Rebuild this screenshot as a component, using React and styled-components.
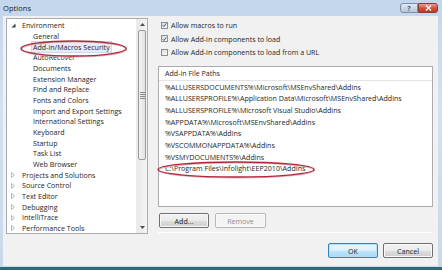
import React from 'react'
import styled, { createGlobalStyle } from 'styled-components'

const Global = createGlobalStyle`
html, body {
  margin: 0;
  padding: 0;
  background: #ffffff;
}
* {
  box-sizing: border-box;
}
`;

const Window = styled.div`
width: 442px;
height: 270px;
display: flex;
flex-direction: column;
background: linear-gradient(#c3d6ec, #d3e1f0 40%, #c8d9ec);
border-bottom: 3px solid #2a6b78;
font-family: "Open Sans", Lato, sans-serif;
font-size: 7.1px;
color: #1e1e1e;
overflow: hidden;
`;

const TitleBar = styled.div`
height: 16px;
display: flex;
align-items: flex-start;
padding-left: 3px;
padding-right: 4px;
`;

const Title = styled.div`
font-size: 7.6px;
line-height: 16px;
color: #1a1a1a;
flex: 1;
`;

const CaptionButton = styled.div`
height: 10px;
margin-top: 3px;
width: ${p => p.$w}px;
display: flex;
align-items: center;
justify-content: center;
font-size: 7px;
font-weight: bold;
border: 1px solid ${p => (p.$close ? '#8a3a30' : '#7d8ea4')};
border-radius: ${p => (p.$close ? '0 3px 3px 0' : '3px 0 0 3px')};
background: ${p =>
  p.$close
    ? 'linear-gradient(#e8a093, #d2533f 50%, #c2361f)'
    : 'linear-gradient(#e3ebf4, #c8d6e6 50%, #b9cade)'};
color: ${p => (p.$close ? '#ffffff' : '#44566e')};
`;

const Client = styled.div`
flex: 1;
margin: 0 4px 1px 3px;
background: #f1f1f1;
padding: 2px 5px 0 3px;
display: flex;
flex-direction: column;
`;

const Main = styled.div`
height: 216px;
display: flex;
gap: 10px;
`;

const TreePanel = styled.div`
position: relative;
width: 142px;
height: 216px;
background: #ffffff;
border: 1px solid #a9acb2;
display: flex;
`;

const TreeList = styled.div`
flex: 1;
padding-top: 1.3px;
`;

const TreeRow = styled.div`
height: 10.68px;
line-height: 10.68px;
display: flex;
align-items: center;
padding-left: ${p => (p.$child ? 25 : 4)}px;
white-space: nowrap;
`;

const Expander = styled.span`
width: 10px;
display: inline-flex;
align-items: center;
justify-content: flex-start;
`;

const ItemText = styled.span`
padding: 0 1px;
${p =>
  p.$selected &&
  `
  background: #e4eefa;
  outline: 1px solid #c9dbf1;
`}
`;

const ScrollBar = styled.div`
width: 11px;
display: flex;
flex-direction: column;
background: linear-gradient(90deg, #e9e9e9, #f5f5f5);
border-left: 1px solid #ececec;
`;

const ScrollArrow = styled.div`
height: 11px;
display: flex;
align-items: center;
justify-content: center;
`;

const ScrollTrack = styled.div`
flex: 1;
display: flex;
flex-direction: column;
padding: 0 1px;
`;

const Thumb = styled.div`
height: 130px;
border: 1px solid #9a9a9a;
border-radius: 2px;
background: linear-gradient(90deg, #f3f3f3, #e2e2e2);
display: flex;
flex-direction: column;
align-items: center;
justify-content: center;
gap: 1px;
`;

const Grip = styled.div`
width: 5px;
height: 1px;
background: #8b8b8b;
`;

const RightPane = styled.div`
width: 275px;
display: flex;
flex-direction: column;
`;

const Checks = styled.div`
height: 48px;
padding-top: 0.5px;
`;

const CheckRow = styled.div`
height: 13.5px;
display: flex;
align-items: center;
gap: 3px;
padding-left: 3px;
`;

const Box = styled.span`
width: 7px;
height: 7px;
border: 1px solid #8e8f8f;
background: linear-gradient(135deg, #dcdcdc, #fbfbfb);
display: inline-flex;
align-items: center;
justify-content: center;
`;

const ListBox = styled.div`
position: relative;
height: 141px;
background: #ffffff;
border: 1px solid #a9acb2;
`;

const ListHeader = styled.div`
height: 14px;
line-height: 13px;
padding-left: 6px;
border-bottom: 1px solid #e2e3e6;
`;

const PathRows = styled.div`
padding-top: 0.5px;
`;

const PathRow = styled.div`
height: 11.7px;
line-height: 11.7px;
padding-left: 6px;
white-space: nowrap;
`;

const ButtonRow = styled.div`
display: flex;
gap: 6px;
margin-top: 6px;
padding-left: 1px;
`;

const Button = styled.div`
width: ${p => p.$w || 50}px;
height: 15px;
display: flex;
align-items: center;
justify-content: center;
border-radius: 2px;
border: 1px solid ${p => (p.$default ? '#3c7fb1' : p.$disabled ? '#b5b8ba' : '#707070')};
background: ${p =>
  p.$default
    ? 'linear-gradient(#eaf6fd, #d9f0fc 50%, #bee6fd 51%, #a7d9f5)'
    : p.$disabled
    ? '#f4f4f4'
    : 'linear-gradient(#f2f2f2, #ebebeb 50%, #dddddd 51%, #cfcfcf)'};
color: ${p => (p.$disabled ? '#8f8f8f' : '#1e1e1e')};
box-shadow: ${p => (p.$default ? 'inset 0 0 0 1px #b7e0f8' : 'inset 0 0 0 1px #fafafa')};
`;

const Separator = styled.div`
margin-top: auto;
margin-bottom: 1px;
height: 1px;
background: #d5d5d5;
border-bottom: 1px solid #ffffff;
`;

const Footer = styled.div`
display: flex;
justify-content: flex-end;
gap: 5px;
margin-top: 9px;
`;

const Ring = styled.svg`
position: absolute;
left: ${p => p.$x}px;
top: ${p => p.$y}px;
overflow: visible;
pointer-events: none;
`;

function Annotation({ x, y, w, h }) {
  return (
    <Ring $x={x} $y={y} width={w} height={h} viewBox={`0 0 ${w} ${h}`}>
      <ellipse cx={w / 2 + 0.6} cy={h / 2 + 0.8} rx={w / 2 - 1} ry={h / 2 - 1} fill="none" stroke="#d9b7b9" strokeWidth="1.4" />
      <ellipse cx={w / 2} cy={h / 2} rx={w / 2 - 1} ry={h / 2 - 1} fill="none" stroke="#b3273a" strokeWidth="1.3" />
    </Ring>
  )
}

function Tick() {
  return (
    <svg width="6" height="6" viewBox="0 0 6 6">
      <path d="M0.8 3.2 L2.4 4.8 L5.2 0.9" fill="none" stroke="#2b4f8a" strokeWidth="1.1" />
    </svg>
  )
}

const children = [
  'General',
  'Add-in/Macros Security',
  'AutoRecover',
  'Documents',
  'Extension Manager',
  'Find and Replace',
  'Fonts and Colors',
  'Import and Export Settings',
  'International Settings',
  'Keyboard',
  'Startup',
  'Task List',
  'Web Browser',
]

const collapsed = [
  'Projects and Solutions',
  'Source Control',
  'Text Editor',
  'Debugging',
  'IntelliTrace',
  'Performance Tools',
]

const paths = [
  '%ALLUSERSDOCUMENTS%\\Microsoft\\MSEnvShared\\Addins',
  '%ALLUSERSPROFILE%\\Application Data\\Microsoft\\MSEnvShared\\Addins',
  '%ALLUSERSPROFILE%\\Microsoft Visual Studio\\Addins',
  '%APPDATA%\\Microsoft\\MSEnvShared\\Addins',
  '%VSAPPDATA%\\Addins',
  '%VSCOMMONAPPDATA%\\Addins',
  '%VSMYDOCUMENTS%\\Addins',
  'C:\\Program Files\\Infolight\\EEP2010\\AddIns',
]

const checks = [
  { label: 'Allow macros to run', on: true },
  { label: 'Allow Add-in components to load', on: true },
  { label: 'Allow Add-in components to load from a URL', on: false },
]

export default function App() {
  return (
    <>
      <Global />
      <Window>
        <TitleBar>
          <Title>Options</Title>
          <CaptionButton $w={18}>?</CaptionButton>
          <CaptionButton $w={20} $close>
            <svg width="7" height="6" viewBox="0 0 7 6">
              <path d="M1 0.5 L6 5.5 M6 0.5 L1 5.5" stroke="#ffffff" strokeWidth="1.4" />
            </svg>
          </CaptionButton>
        </TitleBar>
        <Client>
          <Main>
            <TreePanel>
              <TreeList>
                <TreeRow>
                  <Expander>
                    <svg width="5" height="5" viewBox="0 0 5 5">
                      <path d="M4.5 0.5 L4.5 4.5 L0.5 4.5 Z" fill="#3c3c3c" />
                    </svg>
                  </Expander>
                  <ItemText>Environment</ItemText>
                </TreeRow>
                {children.map(c => (
                  <TreeRow key={c} $child>
                    <ItemText $selected={c === 'Add-in/Macros Security'}>{c}</ItemText>
                  </TreeRow>
                ))}
                {collapsed.map(c => (
                  <TreeRow key={c}>
                    <Expander>
                      <svg width="4" height="6" viewBox="0 0 4 6">
                        <path d="M0.5 0.5 L3.5 3 L0.5 5.5 Z" fill="none" stroke="#a5a5a5" strokeWidth="0.8" />
                      </svg>
                    </Expander>
                    <ItemText>{c}</ItemText>
                  </TreeRow>
                ))}
              </TreeList>
              <ScrollBar>
                <ScrollArrow>
                  <svg width="5" height="3" viewBox="0 0 5 3">
                    <path d="M0 3 L2.5 0 L5 3 Z" fill="#4d4d4d" />
                  </svg>
                </ScrollArrow>
                <ScrollTrack>
                  <Thumb>
                    <Grip />
                    <Grip />
                    <Grip />
                    <Grip />
                  </Thumb>
                </ScrollTrack>
                <ScrollArrow>
                  <svg width="5" height="3" viewBox="0 0 5 3">
                    <path d="M0 0 L2.5 3 L5 0 Z" fill="#4d4d4d" />
                  </svg>
                </ScrollArrow>
              </ScrollBar>
              <Annotation x={13} y={21} w={107} h={17} />
            </TreePanel>
            <RightPane>
              <Checks>
                {checks.map(c => (
                  <CheckRow key={c.label}>
                    <Box>{c.on && <Tick />}</Box>
                    <span>{c.label}</span>
                  </CheckRow>
                ))}
              </Checks>
              <ListBox>
                <ListHeader>Add-in File Paths</ListHeader>
                <PathRows>
                  {paths.map(p => (
                    <PathRow key={p}>{p}</PathRow>
                  ))}
                </PathRows>
                <Annotation x={-2} y={94} w={158} h={17} />
              </ListBox>
              <ButtonRow>
                <Button>Add...</Button>
                <Button $w={51} $disabled>Remove</Button>
              </ButtonRow>
              <Separator />
            </RightPane>
          </Main>
          <Footer>
            <Button $default>OK</Button>
            <Button>Cancel</Button>
          </Footer>
        </Client>
      </Window>
    </>
  )
}
